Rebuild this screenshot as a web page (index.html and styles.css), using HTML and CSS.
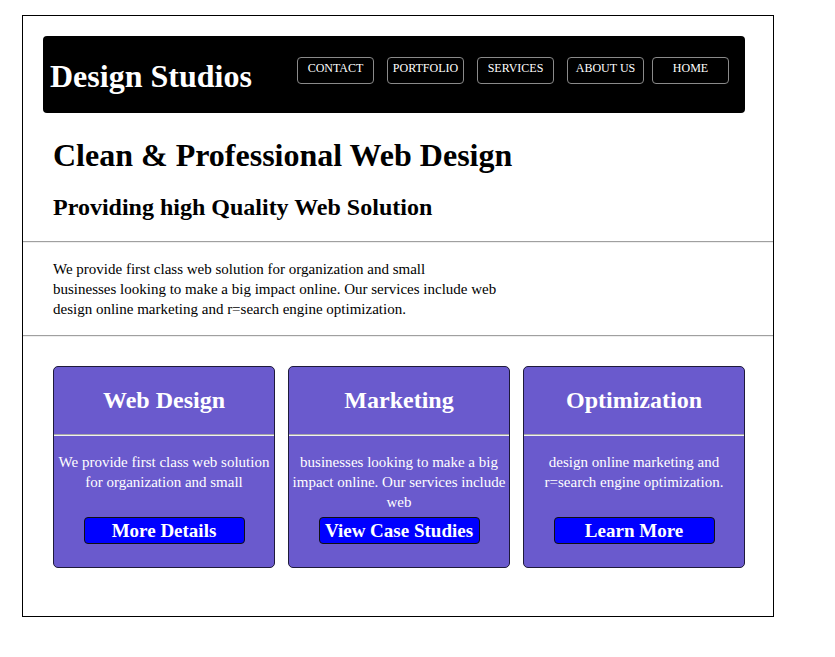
FILE: index.html
```html
<!DOCTYPE html>
<html>
<head>
<meta charset="utf-8">
<title>Design Studios</title>
<link rel="stylesheet" href="styles.css">
</head>
<body>
<div class="page">
  <header class="header">
    <div class="logo">Design Studios</div>
    <nav class="nav">
      <a class="nav-btn">CONTACT</a>
      <a class="nav-btn">PORTFOLIO</a>
      <a class="nav-btn">SERVICES</a>
      <a class="nav-btn">ABOUT US</a>
      <a class="nav-btn nav-home">HOME</a>
    </nav>
  </header>
  <section class="intro">
    <h1 class="title">Clean &amp; Professional Web Design</h1>
    <h2 class="subtitle">Providing high Quality Web Solution</h2>
  </section>
  <hr class="rule">
  <p class="about">We provide first class web solution for organization and small<br>businesses looking to make a big impact online. Our services include web design online marketing and r=search engine optimization.</p>
  <hr class="rule">
  <section class="cards">
    <div class="card">
      <h3 class="card-title">Web Design</h3>
      <hr class="card-rule">
      <p class="card-text">We provide first class web solution for organization and small</p>
      <a class="card-btn">More Details</a>
    </div>
    <div class="card">
      <h3 class="card-title">Marketing</h3>
      <hr class="card-rule">
      <p class="card-text">businesses looking to make a big impact online. Our services include web</p>
      <a class="card-btn">View Case Studies</a>
    </div>
    <div class="card">
      <h3 class="card-title">Optimization</h3>
      <hr class="card-rule">
      <p class="card-text">design online marketing and r=search engine optimization.</p>
      <a class="card-btn">Learn More</a>
    </div>
  </section>
</div>
</body>
</html>
```
FILE: styles.css
```css
html, body {
  margin: 0;
  padding: 0;
  background: #fff;
}
body {
  font-family: "Liberation Serif", "Times New Roman", serif;
  color: #000;
}
.page {
  margin: 15px 0 0 22px;
  width: 750px;
  height: 600px;
  border: 1px solid #000;
}
.header {
  margin: 20px 0 0 20px;
  width: 702px;
  height: 77px;
  box-sizing: border-box;
  background: #000;
  border-radius: 4px;
  display: flex;
  align-items: flex-start;
  justify-content: space-between;
  padding: 0 16px 0 7px;
}
.logo {
  color: #fff;
  font-weight: bold;
  font-size: 32px;
  line-height: 36px;
  margin-top: 22px;
}
.nav {
  display: flex;
  margin-top: 21px;
}
.nav-btn {
  display: block;
  box-sizing: border-box;
  width: 77px;
  height: 27px;
  margin-left: 13px;
  padding-top: 2px;
  border: 1px solid #8a8a8a;
  border-radius: 4px;
  color: #fff;
  font-size: 12px;
  line-height: 16px;
  text-align: center;
}
.nav-home {
  margin-left: 8px;
}
.intro {
  padding: 0 0 0 30px;
}
.title {
  margin: 24px 0 0;
  font-size: 32px;
  line-height: 36px;
  font-weight: bold;
}
.subtitle {
  margin: 20px 0 20px;
  font-size: 24px;
  line-height: 28px;
  font-weight: bold;
}
.rule {
  margin: 0;
  border: 0;
  border-top: 1px solid #a0a0a0;
  border-bottom: 1px solid #eeeeee;
}
.about {
  margin: 16px 0 16px 30px;
  width: 455px;
  font-size: 15px;
  line-height: 20px;
}
.cards {
  display: flex;
  gap: 13px;
  padding: 29px 0 0 30px;
}
.card {
  box-sizing: border-box;
  width: 222px;
  height: 202px;
  background: #6a5acd;
  border: 1px solid #1e1a3a;
  border-radius: 5px;
  color: #fff;
  text-align: center;
}
.card-title {
  margin: 19px 0 20px;
  font-size: 24px;
  line-height: 28px;
  font-weight: bold;
}
.card-rule {
  margin: 0;
  border: 0;
  border-top: 1px solid #a8a8a8;
  border-bottom: 1px solid #f0f0f0;
}
.card-text {
  margin: 16px 2px 0;
  height: 60px;
  font-size: 15px;
  line-height: 20px;
}
.card-btn {
  display: block;
  box-sizing: border-box;
  width: 161px;
  height: 27px;
  margin: 5px auto 0;
  padding-top: 2px;
  background: #0000ff;
  border: 1px solid #111;
  border-radius: 4px;
  color: #fff;
  font-weight: bold;
  font-size: 19px;
  line-height: 22px;
}
```
